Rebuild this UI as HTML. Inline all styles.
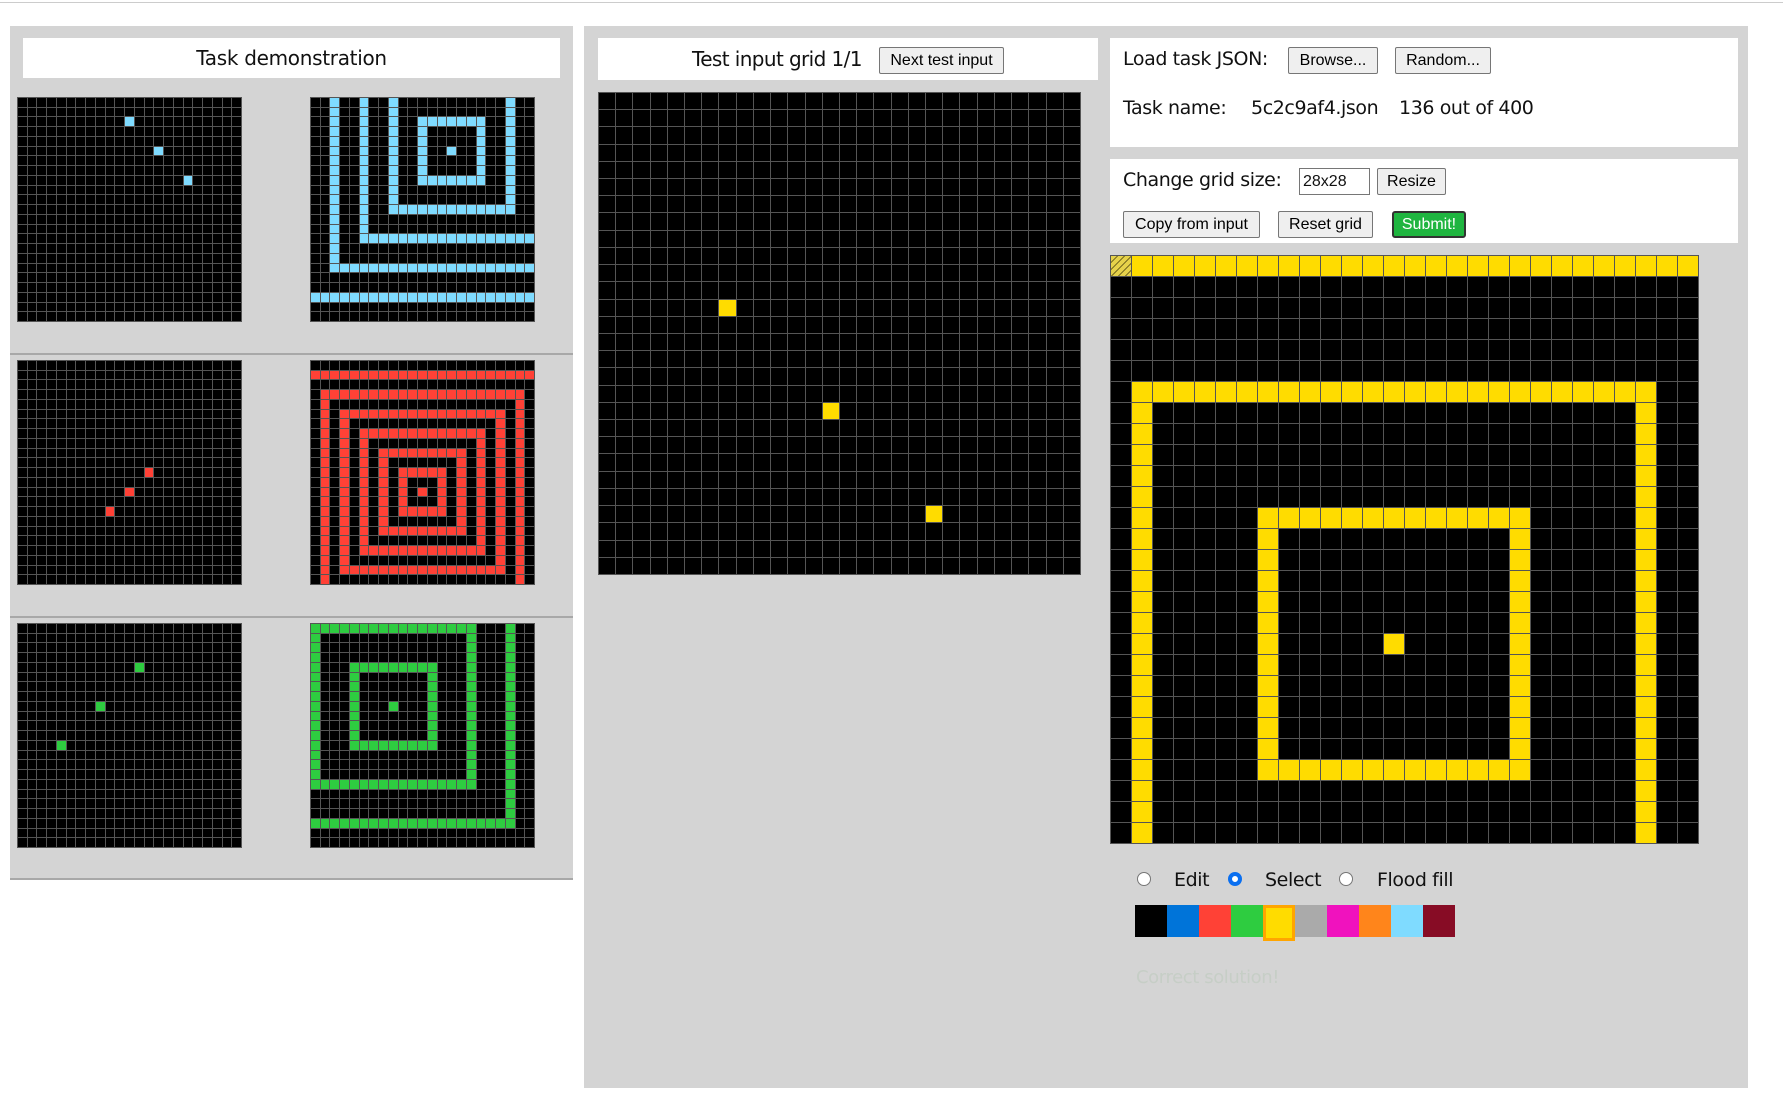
<!DOCTYPE html>
<html><head><meta charset="utf-8">
<style>
*{box-sizing:border-box;margin:0;padding:0}
body{width:1783px;height:1107px;background:#fff;position:relative;overflow:hidden;font-family:"DejaVu Sans","Liberation Sans",sans-serif;color:#111}
.abs{position:absolute}
.gray{background:#d4d4d4}
.white{background:#fff}
.grid{position:absolute;display:grid;gap:1px;padding:1px;background:#555}
.grid div{background:#000}
.btn{position:absolute;background:#efefef;border:1px solid #767676;border-radius:2px;font-family:"Liberation Sans",Arial,sans-serif;font-size:16px;display:flex;align-items:center;justify-content:center;color:#000}
.lbl{position:absolute;font-size:19px;white-space:nowrap;line-height:24px;letter-spacing:-0.4px}
.radio{position:absolute;width:14px;height:14px;border-radius:50%;border:1px solid #767676;background:#fff}
</style></head><body>
<div class="abs" style="left:0;top:2px;width:1783px;height:1px;background:#ccc"></div>
<div class="abs gray" style="left:10px;top:26px;width:563px;height:854px;border-bottom:2px solid #a8a8a8"></div>
<div class="abs white" style="left:23px;top:38px;width:537px;height:40px;text-align:center;font-size:20px;line-height:40px;letter-spacing:-0.3px">Task demonstration</div>
<div class="abs" style="left:10px;top:353px;width:563px;height:2px;background:#a8a8a8"></div>
<div class="abs" style="left:10px;top:616px;width:563px;height:2px;background:#a8a8a8"></div>
<div class="abs gray" style="left:584px;top:26px;width:1164px;height:1062px"></div>
<div class="abs white" style="left:598px;top:38px;width:500px;height:42px"></div>
<div class="lbl" style="left:692px;top:47px;font-size:20px;letter-spacing:-0.6px">Test input grid 1/1</div>
<div class="btn" style="left:879px;top:47px;width:125px;height:27px">Next test input</div>

<div class="abs white" style="left:1110px;top:38px;width:628px;height:109px"></div>
<div class="lbl" style="left:1123px;top:47px">Load task JSON:</div>
<div class="btn" style="left:1288px;top:47px;width:90px;height:27px">Browse...</div>
<div class="btn" style="left:1395px;top:47px;width:96px;height:27px">Random...</div>
<div class="lbl" style="left:1123px;top:96px">Task name:</div>
<div class="lbl" style="left:1251px;top:96px">5c2c9af4.json</div>
<div class="lbl" style="left:1399px;top:96px">136 out of 400</div>

<div class="abs white" style="left:1110px;top:159px;width:628px;height:84px"></div>
<div class="lbl" style="left:1123px;top:168px">Change grid size:</div>
<div class="abs" style="left:1299px;top:168px;width:71px;height:27px;border:1px solid #767676;background:#fff;font-family:'Liberation Sans',Arial,sans-serif;font-size:16px;line-height:25px;padding-left:3px">28x28</div>
<div class="btn" style="left:1377px;top:168px;width:69px;height:27px">Resize</div>
<div class="btn" style="left:1123px;top:211px;width:137px;height:27px">Copy from input</div>
<div class="btn" style="left:1278px;top:211px;width:95px;height:27px">Reset grid</div>
<div class="btn" style="left:1392px;top:211px;width:74px;height:27px;background:#1fb540;color:#fff;border:2px solid #333;border-radius:3px">Submit!</div>

<div class="radio" style="left:1137px;top:872px"></div>
<div class="lbl" style="left:1174px;top:868px">Edit</div>
<div class="radio" style="left:1228px;top:872px;border:4px solid #0a6ff0"></div>
<div class="lbl" style="left:1265px;top:868px">Select</div>
<div class="radio" style="left:1339px;top:872px"></div>
<div class="lbl" style="left:1377px;top:868px">Flood fill</div>

<div id="pal" class="abs" style="left:1135px;top:905px;height:32px;display:flex"></div>
<div class="lbl" style="left:1136px;top:966px;color:#c6cec6;font-size:18px">Correct solution!</div>

<script>
function mk(x,y,size,n,cells,color,hatch){
  const g=document.createElement('div');g.className='grid';
  g.style.cssText+=`left:${x}px;top:${y}px;width:${size}px;height:${size}px;grid-template-columns:repeat(${n},1fr);grid-template-rows:repeat(${n},1fr)`;
  for(let r=0;r<n;r++)for(let c=0;c<n;c++){const d=document.createElement('div');
    if(cells(r,c))d.style.background=color;
    if(hatch&&r==0&&c==0)d.style.background='repeating-linear-gradient(135deg,#e6d24a 0 4px,#7a6d20 4px 5px)';
    g.appendChild(d);}
  document.body.appendChild(g);
}
function dots(pts){return (r,c)=>pts.some(p=>p[0]==c&&p[1]==r);}
function sq(cx,cy,d){return (r,c)=>{const m=Math.max(Math.abs(c-cx),Math.abs(r-cy));return m%d==0;};}
mk(17,97,225,23,dots([[11,2],[14,5],[17,8]]),'#7fdbff');
mk(310,97,225,23,sq(14,5,3),'#7fdbff');
mk(17,360,225,23,dots([[13,11],[11,13],[9,15]]),'#ff4136');
mk(310,360,225,23,sq(11,13,2),'#ff4136');
mk(17,623,225,23,dots([[12,4],[8,8],[4,12]]),'#2ecc40');
mk(310,623,225,23,sq(8,8,4),'#2ecc40');
mk(598,92,483,28,dots([[7,12],[13,18],[19,24]]),'#ffdc00');
mk(1110,255,589,28,sq(13,18,6),'#ffdc00',true);
const cols=['#000','#0074d9','#ff4136','#2ecc40','#ffdc00','#aaaaaa','#f012be','#ff851b','#7fdbff','#870c25'];
const p=document.getElementById('pal');
cols.forEach((c,i)=>{const d=document.createElement('div');d.style.cssText=`width:32px;height:32px;background:${c}`;
 if(i==4){d.style.border='3px solid #ffa500';d.style.height='36px';}p.appendChild(d);});
</script>
</body></html>
